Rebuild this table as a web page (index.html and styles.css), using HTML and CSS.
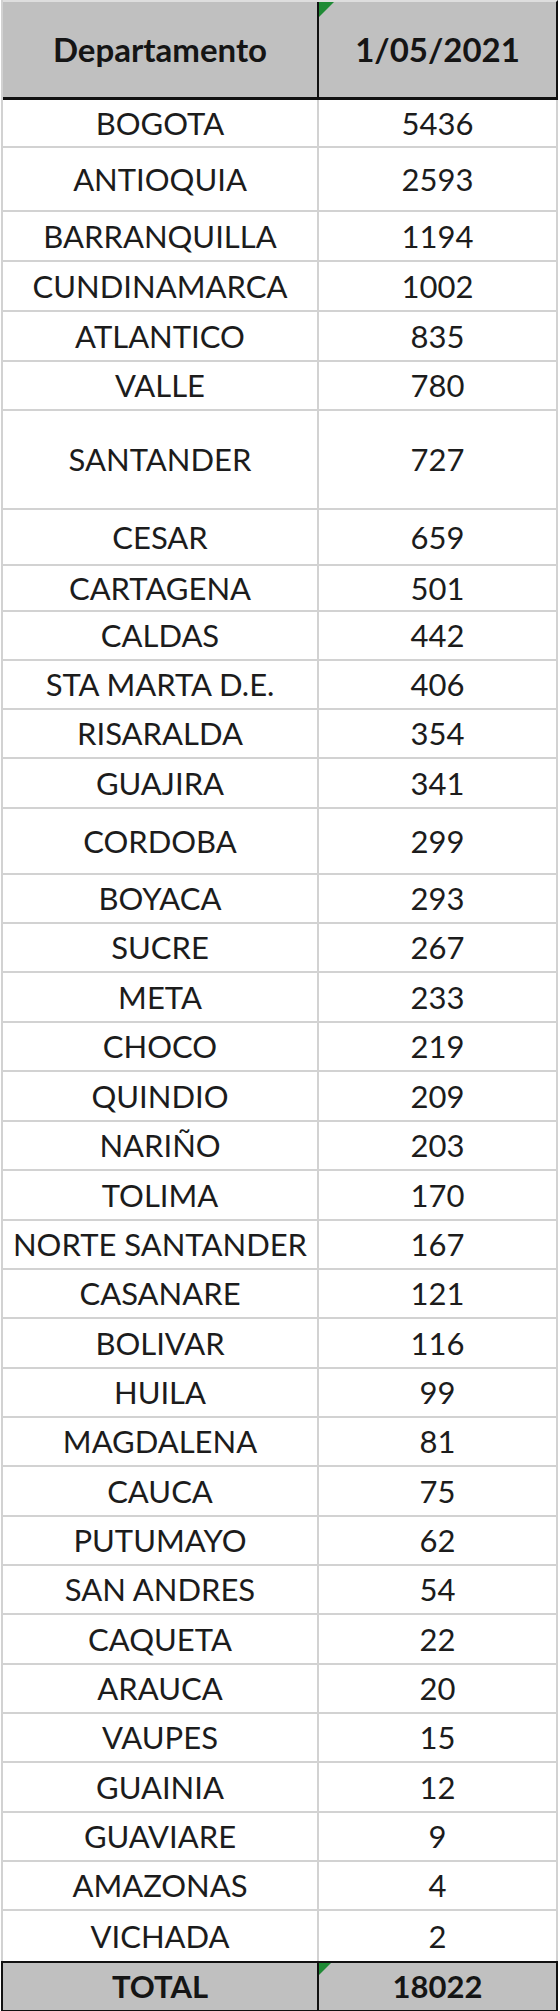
FILE: index.html
```html
<!DOCTYPE html>
<html lang="es">
<head>
<meta charset="utf-8">
<title>Departamento 1/05/2021</title>
<link rel="stylesheet" href="styles.css">
</head>
<body>
<div class="sheet">
  <div class="row row--head">
    <div class="cell cell--name">Departamento</div>
    <div class="cell cell--value"><span class="flag"></span>1/05/2021</div>
  </div>
  <div class="row h48"><div class="cell cell--name">BOGOTA</div><div class="cell cell--value">5436</div></div>
  <div class="row h64"><div class="cell cell--name">ANTIOQUIA</div><div class="cell cell--value">2593</div></div>
  <div class="row h50"><div class="cell cell--name">BARRANQUILLA</div><div class="cell cell--value">1194</div></div>
  <div class="row h50"><div class="cell cell--name">CUNDINAMARCA</div><div class="cell cell--value">1002</div></div>
  <div class="row h50"><div class="cell cell--name">ATLANTICO</div><div class="cell cell--value">835</div></div>
  <div class="row h49"><div class="cell cell--name">VALLE</div><div class="cell cell--value">780</div></div>
  <div class="row h99"><div class="cell cell--name">SANTANDER</div><div class="cell cell--value">727</div></div>
  <div class="row h56"><div class="cell cell--name">CESAR</div><div class="cell cell--value">659</div></div>
  <div class="row h46"><div class="cell cell--name">CARTAGENA</div><div class="cell cell--value">501</div></div>
  <div class="row h49"><div class="cell cell--name">CALDAS</div><div class="cell cell--value">442</div></div>
  <div class="row h49"><div class="cell cell--name">STA MARTA D.E.</div><div class="cell cell--value">406</div></div>
  <div class="row h49"><div class="cell cell--name">RISARALDA</div><div class="cell cell--value">354</div></div>
  <div class="row h50"><div class="cell cell--name">GUAJIRA</div><div class="cell cell--value">341</div></div>
  <div class="row h66"><div class="cell cell--name">CORDOBA</div><div class="cell cell--value">299</div></div>
  <div class="row h49"><div class="cell cell--name">BOYACA</div><div class="cell cell--value">293</div></div>
  <div class="row h49"><div class="cell cell--name">SUCRE</div><div class="cell cell--value">267</div></div>
  <div class="row h50"><div class="cell cell--name">META</div><div class="cell cell--value">233</div></div>
  <div class="row h49"><div class="cell cell--name">CHOCO</div><div class="cell cell--value">219</div></div>
  <div class="row h50"><div class="cell cell--name">QUINDIO</div><div class="cell cell--value">209</div></div>
  <div class="row h49"><div class="cell cell--name">NARIÑO</div><div class="cell cell--value">203</div></div>
  <div class="row h50"><div class="cell cell--name">TOLIMA</div><div class="cell cell--value">170</div></div>
  <div class="row h49"><div class="cell cell--name">NORTE SANTANDER</div><div class="cell cell--value">167</div></div>
  <div class="row h49"><div class="cell cell--name">CASANARE</div><div class="cell cell--value">121</div></div>
  <div class="row h50"><div class="cell cell--name">BOLIVAR</div><div class="cell cell--value">116</div></div>
  <div class="row h49"><div class="cell cell--name">HUILA</div><div class="cell cell--value">99</div></div>
  <div class="row h49"><div class="cell cell--name">MAGDALENA</div><div class="cell cell--value">81</div></div>
  <div class="row h50"><div class="cell cell--name">CAUCA</div><div class="cell cell--value">75</div></div>
  <div class="row h49"><div class="cell cell--name">PUTUMAYO</div><div class="cell cell--value">62</div></div>
  <div class="row h49"><div class="cell cell--name">SAN ANDRES</div><div class="cell cell--value">54</div></div>
  <div class="row h50"><div class="cell cell--name">CAQUETA</div><div class="cell cell--value">22</div></div>
  <div class="row h49"><div class="cell cell--name">ARAUCA</div><div class="cell cell--value">20</div></div>
  <div class="row h49"><div class="cell cell--name">VAUPES</div><div class="cell cell--value">15</div></div>
  <div class="row h50"><div class="cell cell--name">GUAINIA</div><div class="cell cell--value">12</div></div>
  <div class="row h49"><div class="cell cell--name">GUAVIARE</div><div class="cell cell--value">9</div></div>
  <div class="row h49"><div class="cell cell--name">AMAZONAS</div><div class="cell cell--value">4</div></div>
  <div class="row h50 row--last"><div class="cell cell--name">VICHADA</div><div class="cell cell--value">2</div></div>
  <div class="row row--total">
    <div class="cell cell--name">TOTAL</div>
    <div class="cell cell--value"><span class="flag flag--small"></span>18022</div>
  </div>
</div>
</body>
</html>
```
FILE: styles.css
```css
html, body {
  margin: 0;
  padding: 0;
  background: #ffffff;
}

body {
  width: 560px;
  font-family: Lato, "Open Sans", "Liberation Sans", sans-serif;
  color: #1c1c1c;
}

.sheet {
  width: 557px;
  margin-left: 1px;
  border-left: 2px solid #d2d2d2;
  border-right: 2px solid #d2d2d2;
  box-sizing: border-box;
}

.row {
  display: grid;
  grid-template-columns: 316px 1fr;
  box-sizing: border-box;
  border-bottom: 2px solid #d2d2d2;
}

.cell {
  display: flex;
  align-items: center;
  justify-content: center;
  font-size: 31px;
  line-height: 1;
  white-space: nowrap;
  position: relative;
}

.cell--name {
  border-right: 2px solid #d2d2d2;
}

.h46 { height: 46px; }
.h48 { height: 48px; }
.h49 { height: 49px; }
.h50 { height: 50px; }
.h56 { height: 56px; }
.h64 { height: 64px; }
.h66 { height: 66px; }
.h99 { height: 99px; }

.row--head {
  height: 100px;
  background: #c0c0c0;
  border-top: 2px solid #dedede;
  border-bottom: 3px solid #111111;
  margin-right: -2px;
  border-right: 2px solid #111111;
}

.row--head .cell {
  font-weight: 700;
  font-size: 33px;
  color: #151515;
}

.row--head .cell--name {
  border-right: 2px solid #111111;
}

.row--last {
  border-bottom: none;
}

.row--total {
  height: 51px;
  background: #c0c0c0;
  border: 2px solid #111111;
  margin-left: -2px;
  margin-right: -2px;
}

.row--total .cell {
  font-weight: 700;
  font-size: 31px;
  color: #151515;
}

.row--total .cell--name {
  border-right: 2px solid #111111;
}

.flag {
  position: absolute;
  left: 0;
  top: 0;
  width: 0;
  height: 0;
  border-top: 15px solid #1f8a35;
  border-right: 15px solid transparent;
}

.flag--small {
  border-top-width: 12px;
  border-right-width: 12px;
}
```
